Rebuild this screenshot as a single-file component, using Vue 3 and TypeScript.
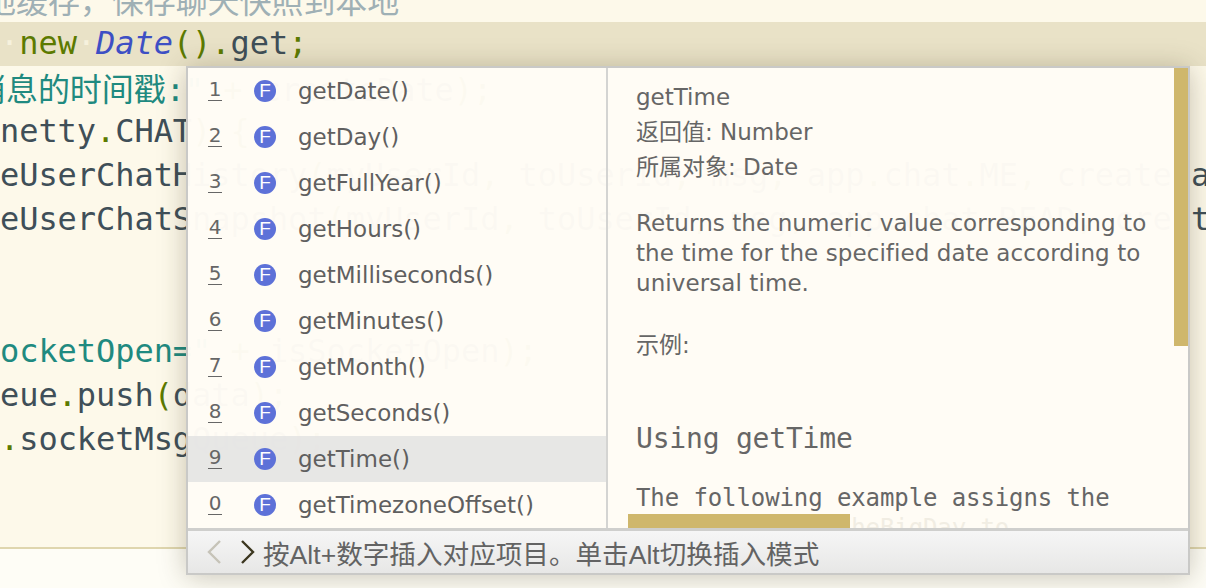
<script setup lang="ts">
interface Item { key: string; name: string; selected?: boolean }
const items: Item[] = [
  { key: '1', name: 'getDate()' },
  { key: '2', name: 'getDay()' },
  { key: '3', name: 'getFullYear()' },
  { key: '4', name: 'getHours()' },
  { key: '5', name: 'getMilliseconds()' },
  { key: '6', name: 'getMinutes()' },
  { key: '7', name: 'getMonth()' },
  { key: '8', name: 'getSeconds()' },
  { key: '9', name: 'getTime()', selected: true },
  { key: '0', name: 'getTimezoneOffset()' },
]
</script>

<template>
  <div class="editor">
    <div class="code">
      <div class="line comment-line"><span class="cjk comment">地缓存，保存聊天快照到本地</span></div>
      <div class="line current"><span class="ws">·</span><span class="kw">new</span><span class="ws">·</span><span class="cls">Date</span><span class="kw">()</span><span class="kw">.</span>get<span class="kw">;</span></div>
      <div class="line teal-line"><span class="cjk teal">消息的时间戳</span><span class="teal">:" </span><span class="kw">+</span> createDate<span class="kw">);</span></div>
      <div class="line">netty<span class="kw">.</span>CHAT<span class="kw">)</span> <span class="kw">{</span></div>
      <div class="line">eUserChatHistory<span class="kw">(</span>myUserId<span class="kw">,</span> toUserId<span class="kw">,</span> msg<span class="kw">,</span> app<span class="kw">.</span>chat<span class="kw">.</span>ME<span class="kw">,</span> createDate<span class="kw">);</span></div>
      <div class="line">eUserChatSnapshot<span class="kw">(</span>myUserId<span class="kw">,</span> toUserId<span class="kw">,</span> msg<span class="kw">,</span> app<span class="kw">.</span>chat<span class="kw">.</span>READ<span class="kw">,</span> createDate<span class="kw">);</span></div>
      <div class="line"></div>
      <div class="line"></div>
      <div class="line"><span class="teal">ocketOpen=" </span><span class="kw">+</span> isSocketOpen<span class="kw">);</span></div>
      <div class="line">eue<span class="kw">.</span>push<span class="kw">(</span>data<span class="kw">);</span></div>
      <div class="line"><span class="kw">.</span>socketMsgQueue<span class="kw">);</span></div>
    </div>
    <div class="rest"></div>

    <div class="popup">
      <div class="panes">
        <ul class="list">
          <li v-for="item in items" :key="item.key" class="row" :class="{ selected: item.selected }">
            <span class="num">{{ item.key }}</span>
            <span class="badge">F</span>
            <span class="name">{{ item.name }}</span>
          </li>
        </ul>
        <div class="doc">
          <p class="meta">getTime</p>
          <p class="meta">返回值: Number</p>
          <p class="meta">所属对象: Date</p>
          <p class="desc">Returns the numeric value corresponding to the time for the specified date according to universal time.</p>
          <p class="example">示例:</p>
          <h3 class="heading">Using getTime</h3>
          <p class="mono">The following example assigns the<br /><span class="faded">date value of theBigDay to</span></p>
          <div class="vbar"></div>
          <div class="hbar"></div>
        </div>
      </div>
      <div class="footer">
        <svg class="arrows" width="56" height="28" viewBox="0 0 56 28" aria-hidden="true">
          <path d="M16 3 L5 14 L16 25" fill="none" stroke="#c6c3b8" stroke-width="2.4" />
          <path d="M38 3 L49 14 L38 25" fill="none" stroke="#3c3720" stroke-width="2.4" />
        </svg>
        <span class="hint">按Alt+数字插入对应项目。单击Alt切换插入模式</span>
      </div>
    </div>
  </div>
</template>

<style scoped>
.editor {
  position: relative;
  width: 1206px;
  height: 588px;
  overflow: hidden;
  background: #fdf9ea;
}
.code {
  height: 549px;
  box-sizing: border-box;
  border-bottom: 2px solid #dfd6ae;
  overflow: hidden;
  font-family: "DejaVu Sans Mono", monospace;
  font-size: 32px;
  letter-spacing: -0.06px;
  color: #3f4f58;
}
.line {
  height: 44px;
  line-height: 42px;
  white-space: pre;
}
.comment-line {
  margin-top: -22px;
  margin-left: -16px;
}
.teal-line {
  margin-left: -26px;
}
.current {
  background: #e9e2c7;
}
.cjk {
  font-family: "Noto Sans CJK SC", sans-serif;
  font-size: 32px;
}
.comment { color: #9fb0b5; }
.teal { color: #1f8a80; }
.kw { color: #5c7a00; }
.cls { color: #3d4fc4; font-style: italic; }
.ws { color: #f6f1dd; }
.rest {
  height: 39px;
  background: #fefdf6;
}
.popup {
  position: absolute;
  left: 186px;
  top: 66px;
  width: 1004px;
  height: 509px;
  box-sizing: border-box;
  border: 2px solid #c9c9c7;
  box-shadow: 0 2px 26px rgba(60, 50, 20, 0.28);
  display: flex;
  flex-direction: column;
  font-family: "DejaVu Sans", "Noto Sans CJK SC", sans-serif;
  color: #666666;
}
.panes {
  flex: 1;
  min-height: 0;
  display: flex;
  background: rgba(255, 252, 245, 0.98);
}
.list {
  width: 418px;
  flex: none;
  margin: 0;
  padding: 0;
  list-style: none;
  border-right: 2px solid #d4d4d2;
  box-sizing: content-box;
}
.row {
  height: 46px;
  display: flex;
  align-items: center;
  padding-left: 20px;
}
.row.selected {
  background: rgba(225, 225, 225, 0.8);
}
.num {
  width: 14px;
  margin-bottom: 2px;
  font-family: "DejaVu Sans", sans-serif;
  font-size: 20px;
  line-height: 21px;
  text-align: center;
  border-bottom: 1px solid #666;
}
.badge {
  width: 22px;
  height: 22px;
  margin-left: 32px;
  border-radius: 50%;
  background: #5d71d8;
  color: #fff;
  font-family: "Liberation Sans", sans-serif;
  font-size: 19px;
  line-height: 22px;
  text-align: center;
}
.name {
  margin-left: 22px;
  font-size: 23px;
  color: #5f5f5f;
}
.doc {
  position: relative;
  flex: 1;
  min-width: 0;
  overflow: hidden;
  padding: 12px 30px 0 28px;
  box-sizing: border-box;
}
.doc p, .doc h3 { margin: 0; }
.meta {
  font-size: 23px;
  line-height: 35px;
}
.desc {
  margin-top: 23px !important;
  font-size: 23px;
  line-height: 30px;
  letter-spacing: 0.08px;
}
.example {
  margin-top: 30px !important;
  font-size: 23px;
  line-height: 35px;
}
.heading {
  margin-top: 58px !important;
  font-family: "DejaVu Sans Mono", monospace;
  font-size: 28px;
  font-weight: normal;
  line-height: 36px;
  letter-spacing: -0.2px;
}
.mono {
  margin-top: 26px !important;
  font-family: "DejaVu Sans Mono", monospace;
  font-size: 24px;
  line-height: 30px;
  letter-spacing: -0.1px;
}
.faded { color: #f1ede3; }
.vbar {
  position: absolute;
  right: 0;
  top: 0;
  width: 14px;
  height: 278px;
  background: #cfb76c;
}
.hbar {
  position: absolute;
  left: 20px;
  bottom: 0;
  width: 222px;
  height: 14px;
  background: #cfb76c;
}
.footer {
  height: 45px;
  flex: none;
  box-sizing: border-box;
  border-top: 3px solid #cfcfcd;
  background: linear-gradient(#f6f6f6, #e7e7e6);
  display: flex;
  align-items: center;
  padding-left: 16px;
}
.arrows { flex: none; }
.hint {
  margin-left: 3px;
  font-family: "Liberation Sans", "Noto Sans CJK SC", sans-serif;
  font-size: 26.6px;
  white-space: nowrap;
  color: #636363;
}
</style>
